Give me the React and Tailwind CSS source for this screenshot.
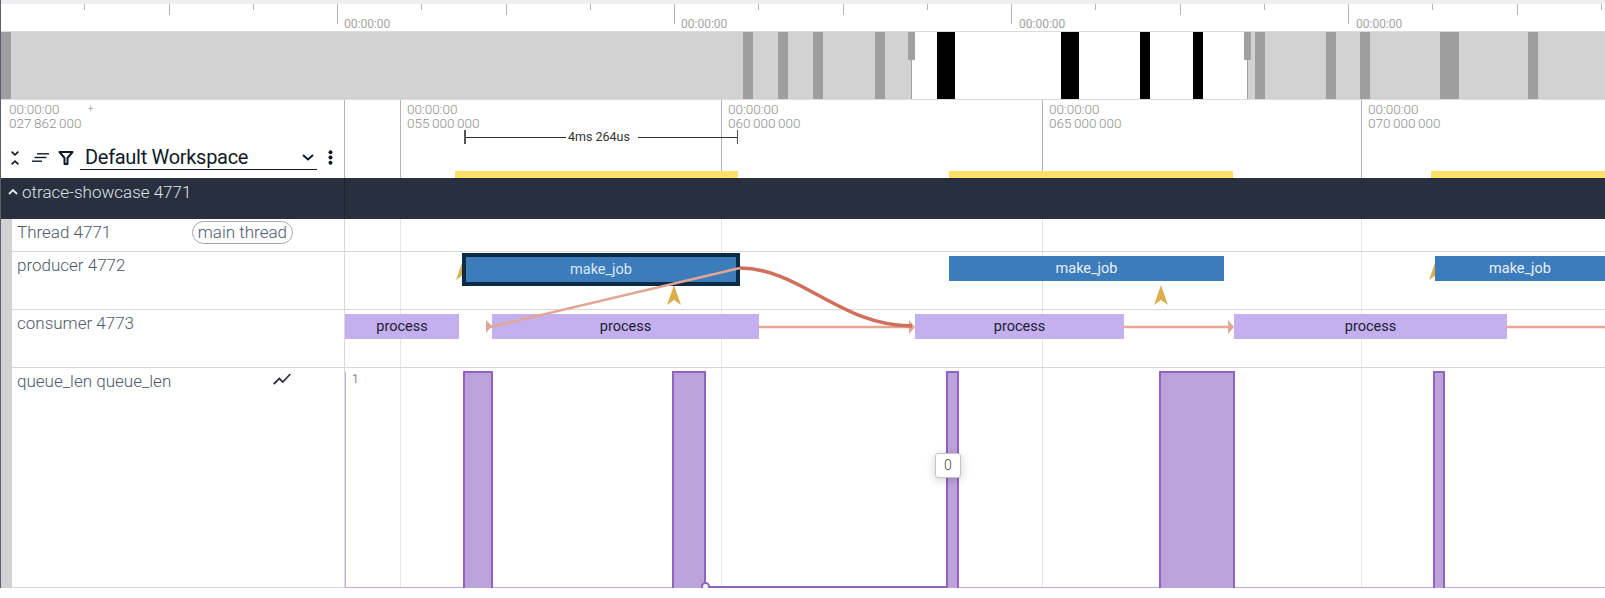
const RULER_TICKS = Array.from({ length: 19 }, (_, i) => i + 1);
const RULER_LABELS = [344, 681, 1019, 1356];

const OVERVIEW_GRAY = [
  { left: 0, width: 912 },
  { left: 1247, width: 358 },
];
const OVERVIEW_DARK = [
  { left: 0, width: 11 },
  { left: 743, width: 10 },
  { left: 778, width: 10 },
  { left: 813, width: 10 },
  { left: 875, width: 10 },
  { left: 1255, width: 10 },
  { left: 1326, width: 10 },
  { left: 1360, width: 10 },
  { left: 1440, width: 19 },
  { left: 1528, width: 10 },
];
const OVERVIEW_BLACK = [
  { left: 937, width: 18 },
  { left: 1061, width: 18 },
  { left: 1140, width: 10 },
  { left: 1193, width: 10 },
];

// x positions below are relative to the track column, which starts at 345
const GRID_LINES = [55, 376, 697, 1016];
const HEADER_TIMES = [
  { left: 62, value: '055 000 000' },
  { left: 383, value: '060 000 000' },
  { left: 704, value: '065 000 000' },
  { left: 1023, value: '070 000 000' },
];
const YELLOW_BARS = [
  { left: 110, width: 283 },
  { left: 604, width: 284 },
  { left: 1086, width: 174 },
];
const PRODUCER_SLICES = [
  { left: 604, width: 275 },
  { left: 1090, width: 170 },
];
const CONSUMER_SLICES = [
  { left: 0, width: 114 },
  { left: 147, width: 267 },
  { left: 570, width: 209 },
  { left: 889, width: 273 },
];
const QUEUE_BARS = [
  { left: 118, width: 30 },
  { left: 327, width: 34 },
  { left: 601, width: 13 },
  { left: 814, width: 76 },
  { left: 1088, width: 12 },
];

const ExpandIcon = () => (
  <svg className="w-[8px] h-[14px] shrink-0" viewBox="0 0 8 14" fill="none" stroke="#111827" strokeWidth="1.6">
    <path d="M0.6 0.6L4 3.8 7.4 0.6" />
    <path d="M0.6 13.4L4 10.2 7.4 13.4" />
  </svg>
);

const ListIcon = () => (
  <svg className="w-[17px] h-[9px] shrink-0" viewBox="0 0 17 9" fill="none" stroke="#111827" strokeWidth="1.4">
    <path d="M5 0.8h12" />
    <path d="M2.5 4.5h12" />
    <path d="M0 8.2h10" />
  </svg>
);

const FilterIcon = () => (
  <svg className="w-[16px] h-[14px] shrink-0" viewBox="0 0 16 14" fill="none" stroke="#111827" strokeWidth="2" strokeLinejoin="round">
    <path d="M1.5 1h13L9.5 7v6h-3V7z" />
  </svg>
);

const ChevronDown = () => (
  <svg className="w-[12px] h-[7px] shrink-0" viewBox="0 0 12 7" fill="none" stroke="#111827" strokeWidth="2">
    <path d="M1 1l5 4.5L11 1" />
  </svg>
);

const MenuDots = () => (
  <svg className="w-[5px] h-[15px] shrink-0" viewBox="0 0 5 15" fill="#111827">
    <circle cx="2.5" cy="2.2" r="2" />
    <circle cx="2.5" cy="7.5" r="2" />
    <circle cx="2.5" cy="12.8" r="2" />
  </svg>
);

const ChartIcon = () => (
  <svg className="w-[18px] h-[12px]" viewBox="0 0 18 12" fill="none" stroke="#2b3445" strokeWidth="1.8">
    <path d="M0.8 11l5.5-5.5 3.5 3.5 7.5-8" />
  </svg>
);

const GoldMarker = ({ x, y }) => (
  <svg className="absolute" width="14" height="20" viewBox="0 0 14 20" style={{ left: x - 7, top: y }}>
    <path d="M7 0L14 20 7 15 0 20z" fill="#dcae4c" />
  </svg>
);

const GridLines = ({ color }) => (
  <>
    {GRID_LINES.map(x => (
      <div key={x} className={`absolute top-0 bottom-0 w-px ${color}`} style={{ left: x }} />
    ))}
  </>
);

const TrackRow = ({ label, height, children, aside, last }) => (
  <div className={`flex ${last ? '' : 'border-b'} border-[#d8d8d8]`} style={{ height }}>
    <div className={`flex items-start w-[333px] shrink-0 pl-[5px] text-[17px] font-light text-[#4d5a6c] border-r border-[#d8d8d8] ${last ? 'border-b' : ''}`}>
      <div className="pt-[3px] leading-[20px]">{label}</div>
      {aside}
    </div>
    <div className="relative flex-1 overflow-hidden">
      <GridLines color="bg-[#e6e6e6]" />
      {children}
    </div>
  </div>
);

const App = () => {
  return (
    <div className="relative w-[1605px] h-[598px] overflow-hidden bg-white font-['Roboto',sans-serif]">
      <div className="absolute left-0 top-0 h-[588px] w-px bg-[#59606e] z-10" />

      {/* Top ruler */}
      <div className="relative h-[31px] border-t-[4px] border-[#efefef]">
        {RULER_TICKS.map(i => (
          <div
            key={i}
            className="absolute top-0 w-px bg-[#b4b4b4]"
            style={{ left: Math.round(i * 84.25), height: i % 4 === 0 ? 20 : i % 2 === 0 ? 11 : 6 }}
          />
        ))}
        {RULER_LABELS.map(x => (
          <span key={x} className="absolute top-[13px] text-[12px] leading-[14px] text-[#a3a3a3]" style={{ left: x }}>
            00:00:00
          </span>
        ))}
      </div>

      {/* Overview */}
      <div className="relative h-[69px] border-y border-[#dcdcdc]">
        {OVERVIEW_GRAY.map(b => (
          <div key={b.left} className="absolute top-0 bottom-0 bg-[#d2d2d2]" style={{ left: b.left, width: b.width }} />
        ))}
        {OVERVIEW_DARK.map(b => (
          <div key={b.left} className="absolute top-0 bottom-0 bg-[#9e9e9e]" style={{ left: b.left, width: b.width }} />
        ))}
        {OVERVIEW_BLACK.map(b => (
          <div key={b.left} className="absolute top-0 bottom-0 bg-black" style={{ left: b.left, width: b.width }} />
        ))}
        <div className="absolute top-0 bottom-0 left-[911px] w-px bg-[#a0a0a0]" />
        <div className="absolute top-0 bottom-0 left-[1247px] w-px bg-[#a0a0a0]" />
        <div className="absolute top-0 left-[908px] w-[7px] h-[28px] bg-[#a0a0a0] rounded-[1px]" />
        <div className="absolute top-0 left-[1244px] w-[7px] h-[28px] bg-[#a0a0a0] rounded-[1px]" />
      </div>

      {/* Time header */}
      <div className="flex h-[78px]">
        <div className="flex flex-col w-[345px] shrink-0 border-r border-[#b4b4b4]">
          <div className="flex pl-[9px] pt-[2px] text-[13.5px] leading-[14px] font-light [word-spacing:-0.8px] text-[#8f8f8f]">
            <div>
              <div>00:00:00</div>
              <div>027 862 000</div>
            </div>
            <span className="ml-[6px] text-[11px]">+</span>
          </div>
          <div className="flex items-center mt-[15px] pl-[11px] pr-[11px]">
            <ExpandIcon />
            <div className="ml-[13px]">
              <ListIcon />
            </div>
            <div className="ml-[9px]">
              <FilterIcon />
            </div>
            <div className="ml-[6px] w-[239px] h-[25px] border-b border-[#111827] flex items-center justify-between pl-[5px] pr-[3px]">
              <span className="text-[20px] leading-[22px] tracking-[-0.3px] text-[#111827]">Default Workspace</span>
              <ChevronDown />
            </div>
            <div className="ml-[11px]">
              <MenuDots />
            </div>
          </div>
        </div>
        <div className="relative flex-1">
          <GridLines color="bg-[#b4b4b4]" />
          {HEADER_TIMES.map(t => (
            <div key={t.left} className="absolute top-[2px] text-[13.5px] leading-[14px] font-light [word-spacing:-0.8px] text-[#8f8f8f]" style={{ left: t.left }}>
              <div>00:00:00</div>
              <div>{t.value}</div>
            </div>
          ))}
          {/* Selection span */}
          <div className="absolute left-[119px] top-[30px] w-[274px] h-[14px] flex items-center text-[12.5px] text-[#333]">
            <div className="w-[2px] h-[14px] bg-[#555]" />
            <div className="w-[100px] h-px bg-[#333]" />
            <span className="ml-[2px] mr-[8px] leading-[14px]">4ms 264us</span>
            <div className="flex-1 h-px bg-[#333]" />
            <div className="w-px h-[14px] bg-[#555]" />
          </div>
          {YELLOW_BARS.map(b => (
            <div key={b.left} className="absolute bottom-0 h-[7px] bg-[#ffdf66]" style={{ left: b.left, width: b.width }} />
          ))}
        </div>
      </div>

      {/* Process header */}
      <div className="relative flex items-start h-[41px] bg-[#282f3e] text-[#dfe3ea]">
        <div className="absolute left-[344px] top-0 bottom-0 w-px bg-[#1f2532]" />
        <svg className="ml-[8px] mt-[10px] w-[10px] h-[8px]" viewBox="0 0 10 8" fill="none" stroke="#e5e7eb" strokeWidth="1.8">
          <path d="M1 6l4-4 4 4" />
        </svg>
        <span className="ml-[4px] mt-[3px] text-[17px] leading-[22px] font-light">otrace-showcase 4771</span>
      </div>

      {/* Tracks */}
      <div className="flex">
        <div className="w-[12px] h-[369px] shrink-0 bg-[#d2d2d2]" />
        <div className="flex-1">
          <TrackRow
            label="Thread 4771"
            height={33}
            aside={
              <span className="ml-auto mr-[51px] mt-[2px] h-[23px] px-[5px] rounded-full border border-[#a8a8a8] leading-[20px]">
                main thread
              </span>
            }
          />
          <TrackRow label="producer 4772" height={58}>
            <GoldMarker x={118} y={8} />
            <GoldMarker x={329} y={33} />
            <GoldMarker x={816} y={33} />
            <GoldMarker x={1091} y={8} />
            <div className="absolute left-[117px] top-[1px] w-[278px] h-[33px] border-[4px] border-[#0c2b47] bg-[#3d7cbb] flex items-center justify-center text-[14.5px] text-[#dbe8f5]">
              make_job
            </div>
            {PRODUCER_SLICES.map(s => (
              <div
                key={s.left}
                className="absolute top-[4px] h-[25px] bg-[#3d7cbb] flex items-center justify-center text-[14.5px] text-[#e8f0f8]"
                style={{ left: s.left, width: s.width }}
              >
                make_job
              </div>
            ))}
          </TrackRow>
          <TrackRow label="consumer 4773" height={58}>
            {CONSUMER_SLICES.map(s => (
              <div
                key={s.left}
                className="absolute top-[4px] h-[25px] bg-[#c4b0ee] flex items-center justify-center text-[14.5px] text-[#1f1b33]"
                style={{ left: s.left, width: s.width }}
              >
                process
              </div>
            ))}
          </TrackRow>
          <TrackRow
            label="queue_len queue_len"
            height={220}
            last
            aside={
              <div className="ml-auto mr-[53px] mt-[5px]">
                <ChartIcon />
              </div>
            }
          >
            <div className="absolute left-0 top-[4px] bottom-0 w-px bg-[#c4b0ee]" />
            <span className="absolute left-[7px] top-[4px] text-[12px] leading-[14px] text-[#8a8a8a]">1</span>
            <div className="absolute left-0 right-0 bottom-0 h-px bg-[#c2abe0]" />
            {QUEUE_BARS.map(b => (
              <div
                key={b.left}
                className="absolute top-[3px] bottom-0 bg-[#bda3db] border-2 border-b-0 border-[#9162bf]"
                style={{ left: b.left, width: b.width }}
              />
            ))}
            <div className="absolute left-[361px] w-[240px] bottom-0 h-[2px] bg-[#9162bf]" />
            <div className="absolute left-[356px] bottom-[-3px] w-[9px] h-[9px] rounded-full border-2 border-[#9162bf] bg-white" />
          </TrackRow>
        </div>
      </div>

      {/* Flow arrows */}
      <svg className="absolute left-0 top-0 pointer-events-none" width="1605" height="598" fill="none">
        <path d="M740 268L490 327" stroke="#e3a594" strokeWidth="2.5" />
        <path d="M486 320L492 326 486 333z" fill="#e3a594" />
        <path d="M759 327H910M1124 327H1230M1507 327H1605" stroke="#e3a594" strokeWidth="2.5" />
        <path d="M909 320L915 327 909 334zM1228 320L1234 327 1228 334z" fill="#e3a594" />
        <path d="M740 268C800 268 840 326 912 326" stroke="#cf6f5c" strokeWidth="3.5" />
      </svg>

      {/* Value tooltip */}
      <div className="absolute left-[935px] top-[453px] w-[26px] h-[25px] rounded-[3px] border border-[#c4c4c4] bg-white shadow-[0_2px_10px_rgba(0,0,0,0.2)] flex items-center justify-center text-[14px] font-light text-[#444]">
        0
      </div>
    </div>
  );
};

export default App;
